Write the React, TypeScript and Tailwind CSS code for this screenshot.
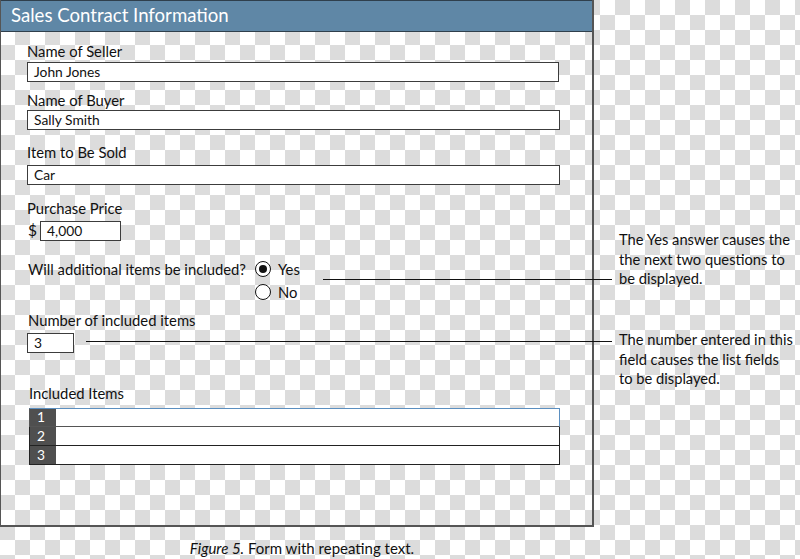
import React from "react";

const font = "font-['Lato','Open_Sans',sans-serif]";

const Label = ({ children, className = "" }: { children: React.ReactNode; className?: string }) => (
  <div className={`h-[20px] leading-[20px] text-[14.8px] text-[#111] ${className}`}>{children}</div>
);

const Field = ({ value, className = "" }: { value: string; className?: string }) => (
  <div
    className={`h-[20px] border-[1.5px] border-[#3c3c3c] bg-white pl-[6px] text-[13.8px] leading-[17px] text-[#111] ${className}`}
  >
    {value}
  </div>
);

const Radio = ({ checked, label }: { checked?: boolean; label: string }) => (
  <div className="flex h-[20px] items-center">
    <span className="flex h-[16px] w-[16px] items-center justify-center rounded-full border-[1.5px] border-[#111] bg-white">
      {checked && <span className="h-[8px] w-[8px] rounded-full bg-[#111]" />}
    </span>
    <span className="ml-[7px] text-[14.8px] text-[#111]">{label}</span>
  </div>
);

export default function App() {
  return (
    <div
      className={`relative h-[559px] w-[800px] overflow-hidden bg-white bg-[image:conic-gradient(#dcdcdc_25%,#fff_0_50%,#dcdcdc_0_75%,#fff_0)] bg-size-[30px_30px] ${font}`}
    >
      <div className="flex h-[527px] w-[594px] flex-col border-l border-b-2 border-r-2 border-[#555]">
        <div className="flex h-[32px] items-center border-t border-b border-[#2f3f4c] bg-[#5f87a6] pl-[10px] text-[18.6px] text-white">
          Sales Contract Information
        </div>

        <div className="flex flex-col pl-[26px]">
          <Label className="mt-[9px]">Name of Seller</Label>
          <Field className="mt-[1px] w-[532px]" value="John Jones" />

          <Label className="mt-[8px]">Name of Buyer</Label>
          <Field className="w-[533px]" value="Sally Smith" />

          <Label className="mt-[12px]">Item to Be Sold</Label>
          <Field className="mt-[3px] w-[533px]" value="Car" />

          <Label className="mt-[13px]">Purchase Price</Label>
          <div className="mt-[1px] flex items-center">
            <span className="w-[13px] pl-[1px] text-[15.5px] text-[#111]">$</span>
            <Field className="w-[81px]" value="4,000" />
          </div>

          <div className="mt-[17px] flex">
            <Label className="w-[228px] pl-[1px]">Will additional items be included?</Label>
            <div className="flex flex-col gap-[3px]">
              <Radio checked label="Yes" />
              <Radio label="No" />
            </div>
          </div>

          <Label className="mt-[8px] pl-[1px]">Number of included items</Label>
          <Field className="mt-[3px] w-[47px]" value="3" />

          <Label className="mt-[30px] pl-[2px] text-[13.8px]">Included Items</Label>
          <div className="mt-[5px] ml-[2px] flex w-[531px] flex-col">
            {["1", "2", "3"].map((n, i) => (
              <div
                key={n}
                className={`flex h-[19px] border ${
                  i === 0 ? "border-[#555] border-t-[#5b8fc0] border-r-[#5b8fc0]" : "border-[#222] border-t-0"
                }`}
              >
                <div className="flex w-[26px] items-center bg-[#4f4f4f] pl-[7px] text-[13.8px] text-white">{n}</div>
                <div className="flex-1 bg-white" />
              </div>
            ))}
          </div>
        </div>
      </div>

      {/* annotation lines */}
      <div className="absolute left-[323px] top-[279px] h-px w-[289px] bg-[#111]" />
      <div className="absolute left-[86px] top-[341px] h-px w-[526px] bg-[#111]" />

      <div className="absolute left-[619px] top-[230px] whitespace-nowrap text-[14.7px] leading-[19.5px] text-[#111]">
        The Yes answer causes the
        <br />
        the next two questions to
        <br />
        be displayed.
      </div>
      <div className="absolute left-[619px] top-[330px] whitespace-nowrap text-[14.7px] leading-[19.5px] text-[#111]">
        The number entered in this
        <br />
        field causes the list fields
        <br />
        to be displayed.
      </div>

      <div className="absolute left-0 top-[537px] w-[604px] text-center text-[15px] text-[#111]">
        <i>Figure 5.</i> Form with repeating text.
      </div>
    </div>
  );
}
